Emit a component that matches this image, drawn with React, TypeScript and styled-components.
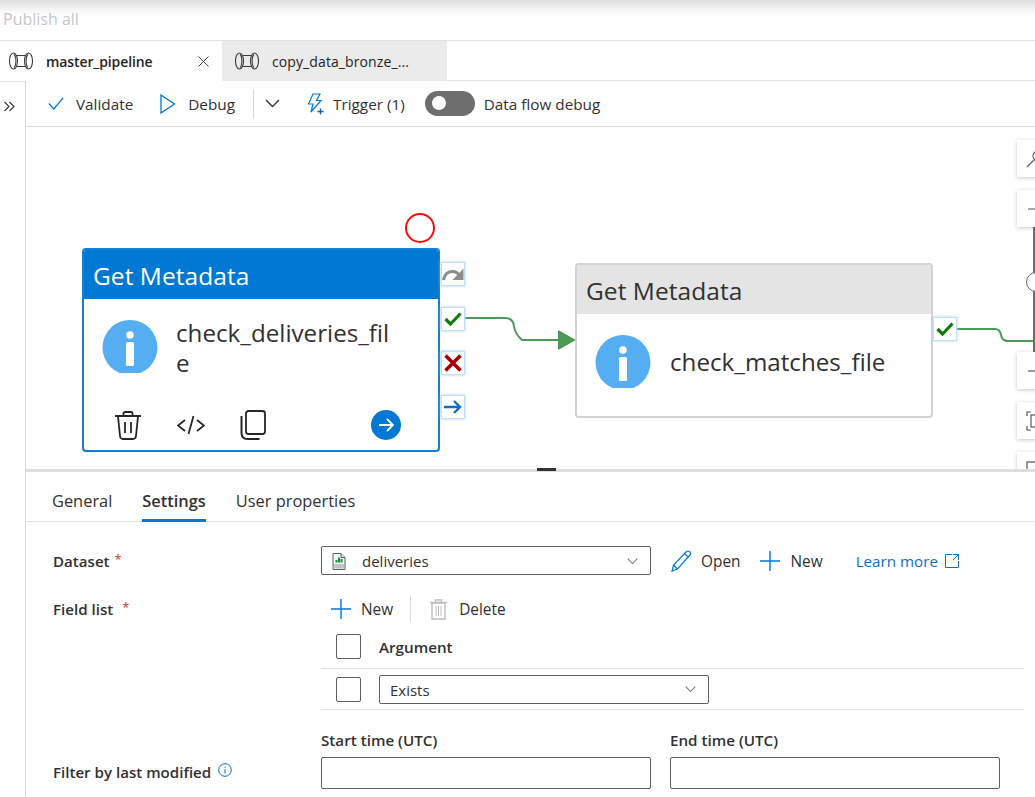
import React from "react";
import styled, { createGlobalStyle } from "styled-components";

const Global = createGlobalStyle`
  html, body { margin: 0; padding: 0; background: #fff; overflow: hidden; }
  * { box-sizing: border-box; }
  body { font-family: "Open Sans", "Noto Sans", "Liberation Sans", sans-serif; color: #323130; }
`;

const Page = styled.div`
  width: 1035px; height: 797px; display: flex; flex-direction: column; overflow: hidden; background: #fff;
`;
const TopBar = styled.div`
  height: 41px; flex: none; padding: 8px 0 0 3px; font-size: 16px; line-height: 22px; color: #c6c6c6;
  background: linear-gradient(#dedede 0, #f4f4f4 9px, #fff 17px); border-bottom: 1px solid #e1e1e1;
`;
const TabStrip = styled.div`
  height: 40px; flex: none; display: flex; box-shadow: inset 0 -1px 0 #e1e1e1;
`;
const Tab = styled.div<{ $active?: boolean }>`
  display: flex; align-items: center; height: 40px;
  width: ${p => (p.$active ? 222 : 225)}px;
  padding-left: ${p => (p.$active ? 9 : 13)}px;
  background: ${p => (p.$active ? "#fff" : "#ebebeb")};
`;
const TabLabel = styled.span<{ $active?: boolean }>`
  margin-left: 13px; font-size: 14px; white-space: nowrap; color: #252423;
  letter-spacing: ${p => (p.$active ? "-0.1px" : "0.1px")};
  font-weight: ${p => (p.$active ? 600 : 400)};
  width: ${p => (p.$active ? "152px" : "auto")};
`;
const Main = styled.div`
  flex: 1; min-height: 0; display: flex;
`;
const LeftRail = styled.div`
  width: 26px; flex: none; border-right: 1px solid #d8d8d8; border-top: 1px solid #e1e1e1; padding: 13px 0 0 3px;
`;
const Workspace = styled.div`
  flex: 1; min-width: 0; display: flex; flex-direction: column;
`;
const Toolbar = styled.div`
  height: 46px; flex: none; display: flex; align-items: center; padding: 0 0 0 22px; border-bottom: 1px solid #dcdcdc;
`;
const ToolButton = styled.div<{ $gap: number; $left?: number }>`
  display: flex; align-items: center; gap: ${p => p.$gap}px; margin-left: ${p => p.$left ?? 0}px;
  font-size: 15.3px; color: #323130; white-space: nowrap;
`;
const ToolDivider = styled.div`
  width: 1px; height: 30px; background: #d4d4d4; margin-left: 18px;
`;
const Toggle = styled.div`
  width: 50px; height: 25px; border-radius: 13px; background: #6e6e6e; margin-left: 20px; padding: 5px 0 0 7px; flex: none;
`;
const Knob = styled.div`
  width: 14px; height: 14px; border-radius: 50%; background: #fff;
`;
const Canvas = styled.div`
  position: relative; height: 342px; flex: none; overflow: hidden; background: #fff;
`;
const Wires = styled.svg`
  position: absolute; left: 0; top: 0;
`;
const Node = styled.div<{ $x: number; $y: number; $w: number; $h: number; $selected?: boolean }>`
  position: absolute; left: ${p => p.$x}px; top: ${p => p.$y}px; width: ${p => p.$w}px; height: ${p => p.$h}px;
  display: flex; flex-direction: column; background: #fff; border-radius: 4px; overflow: hidden;
  border: 2px solid ${p => (p.$selected ? "#0f7fd8" : "#d2d2d2")};
`;
const NodeHeader = styled.div<{ $selected?: boolean }>`
  height: 49px; flex: none; display: flex; align-items: center; padding: 1px 0 0 9px;
  font-size: 24.5px; letter-spacing: 0.05px;
  background: ${p => (p.$selected ? "#0078d4" : "#e4e4e4")};
  color: ${p => (p.$selected ? "#fff" : "#323130")};
`;
const NodeBody = styled.div<{ $center?: boolean }>`
  display: flex; gap: 18px; padding: 21px 0 0 18px; align-items: ${p => (p.$center ? "center" : "flex-start")};
`;
const NodeName = styled.div<{ $single?: boolean }>`
  width: 218px; font-size: 24.2px; line-height: 30px; word-break: break-all; color: #323130;
  margin: ${p => (p.$single ? "1px 0 0 1px" : "-2px 0 0 0")};
`;
const NodeFooter = styled.div`
  margin-top: auto; display: flex; align-items: center; gap: 35px; padding: 0 37px 10px 30px; height: 40px;
`;
const RoundArrow = styled.div`
  width: 30px; height: 30px; margin-left: auto; border-radius: 50%; background: #0078d4; display: flex; align-items: center; justify-content: center;
`;
const PortButton = styled.div<{ $x: number; $y: number }>`
  position: absolute; left: ${p => p.$x}px; top: ${p => p.$y}px; width: 24px; height: 24px;
  display: flex; align-items: center; justify-content: center; background: #fff;
  border: 1px solid #c3ddf5; box-shadow: 0 0 3px #a9cff0;
`;
const Halo = styled.div`
  position: absolute; left: 379px; top: 86px; width: 30px; height: 30px; border-radius: 50%; border: 2px solid #f40f0f;
`;
const ZoomButton = styled.div<{ $y: number; $h?: number }>`
  position: absolute; left: 991px; top: ${p => p.$y}px; width: 40px; height: ${p => p.$h ?? 37}px; background: #fff;
  box-shadow: 0 1px 4px rgba(0,0,0,.22); padding: 9px 0 0 9px; overflow: hidden;
`;
const SliderTrack = styled.div`
  position: absolute; left: 1007px; top: 100px; width: 2px; height: 126px; background: #6b6b6b;
`;
const SliderThumb = styled.div`
  position: absolute; left: 1000px; top: 145px; width: 20px; height: 20px; border-radius: 50%; background: #fff; border: 1.5px solid #666;
`;
const Splitter = styled.div`
  height: 3px; flex: none; background: #dedede; position: relative;
`;
const SplitHandle = styled.div`
  position: absolute; left: 511px; top: -1px; width: 19px; height: 3px; background: #333;
`;
const Tabs = styled.div`
  height: 50px; flex: none; display: flex; gap: 30px; padding-left: 26px; border-bottom: 1px solid #e1e1e1;
`;
const PanelTab = styled.div<{ $active?: boolean }>`
  height: 50px; display: flex; align-items: center; padding-top: 9px; font-size: 16.4px; color: #323130;
  font-weight: ${p => (p.$active ? 600 : 400)};
  border-bottom: 3px solid ${p => (p.$active ? "#0078d4" : "transparent")};
`;
const Form = styled.div`
  display: flex; flex-direction: column; padding: 24px 11px 0 27px;
`;
const FormRow = styled.div<{ $h: number }>`
  display: flex; height: ${p => p.$h}px;
`;
const FieldLabel = styled.div<{ $top: number }>`
  width: 268px; flex: none; padding-top: ${p => p.$top}px; font-size: 15.1px; line-height: 20px; font-weight: 600; color: #323130; white-space: nowrap; display: flex;
`;
const Star = styled.span<{ $gap: number }>`
  color: #d13438; margin-left: ${p => p.$gap}px; font-size: 13px; font-weight: 400; line-height: 16px;
`;
const Select = styled.div<{ $w: number }>`
  width: ${p => p.$w}px; height: 29px; flex: none; display: flex; align-items: center; border: 1px solid #605e5c; border-radius: 2px;
  padding: 1px 12px 0 10px; font-size: 15px; color: #323130;
`;
const SelectText = styled.span<{ $left: number }>`
  margin-left: ${p => p.$left}px; flex: 1;
`;
const Action = styled.div<{ $left: number; $gap: number }>`
  display: flex; align-items: center; margin-left: ${p => p.$left}px; gap: ${p => p.$gap}px; font-size: 15.4px; line-height: 22px; color: #323130; white-space: nowrap;
`;
const ActionText = styled.span`
  padding-top: 2px;
`;
const LearnLink = styled.a`
  display: flex; align-items: center; gap: 7px; margin-left: 33px; font-size: 15.2px; color: #106ebe; white-space: nowrap;
`;
const Content = styled.div`
  flex: 1; display: flex; flex-direction: column;
`;
const DatasetLine = styled.div`
  display: flex; align-items: center; height: 29px;
`;
const FieldTools = styled.div`
  display: flex; align-items: center; height: 26px; margin-top: 1px; padding-left: 10px;
`;
const VBar = styled.div`
  width: 1px; height: 26px; background: #d8d8d8; margin-left: 17px;
`;
const GridRow = styled.div<{ $h: number; $top?: number }>`
  display: flex; align-items: center; height: ${p => p.$h}px; padding-top: ${p => p.$top ?? 0}px; padding-left: 15px; border-bottom: 1px solid #e1e1e1; gap: 18px; flex: none;
`;
const Check = styled.div`
  width: 25px; height: 25px; flex: none; border: 1px solid #605e5c; border-radius: 2px;
`;
const ColHead = styled.div`
  font-size: 15.2px; font-weight: 600;
`;
const TimeRow = styled.div`
  display: flex; gap: 19px; margin-top: 20px;
`;
const TimeField = styled.div`
  width: 330px; display: flex; flex-direction: column;
`;
const TimeLabel = styled.div`
  font-size: 15.2px; line-height: 20px; font-weight: 600; margin-bottom: 7px; white-space: nowrap;
`;
const TimeInput = styled.div`
  height: 32px; border: 1px solid #605e5c; border-radius: 2px;
`;
const InfoWrap = styled.span`
  margin: 1px 0 0 7px; display: flex;
`;

const PipelineIcon = () => (
  <svg width="24" height="18" viewBox="0 0 24 18" fill="none" stroke="#3a3a3a" strokeWidth="1.100">
    <ellipse cx="4.500" cy="9" rx="4" ry="8" />
    <ellipse cx="19.500" cy="9" rx="4" ry="8" />
    <path d="M5 2.500c2.500 2 2.500 11 0 13" />
    <path d="M19 2.500c-2.500 2-2.500 11 0 13" />
    <path d="M7.500 3.500h9M7.500 14.500h9" />
  </svg>
);
const InfoNodeIcon = () => (
  <svg width="56" height="53" viewBox="0 0 56 53" style={{ flex: "none" }}>
    <circle cx="28" cy="27.500" r="27.500" fill="#56aef2" />
    <circle cx="28" cy="15" r="3.800" fill="#fff" />
    <rect x="24" y="22" width="8" height="24" rx="1.500" fill="#fff" />
  </svg>
);
const Trash = () => (
  <svg width="28" height="30" viewBox="0 0 28 30" fill="none" stroke="#262626" strokeWidth="1.800">
    <path d="M1 6h26M9.500 6V3.500q0-1.500 1.500-1.500h6q1.500 0 1.500 1.500V6" />
    <path d="M4 6l2 20q.3 3 3 3h10q2.700 0 3-3l2-20" />
    <path d="M11 12v11M17 12v11" />
  </svg>
);
const CodeIcon = () => (
  <svg width="28" height="24" viewBox="0 0 28 24" fill="none" stroke="#262626" strokeWidth="1.800">
    <path d="M8 7l-7 5.500 7 5.500M20 7l7 5.500-7 5.500M16.500 3l-5 18" />
  </svg>
);
const CopyIcon = () => (
  <svg width="26" height="30" viewBox="0 0 26 30" fill="none" stroke="#262626" strokeWidth="1.800">
    <rect x="6" y="1" width="19" height="23" rx="2.500" />
    <path d="M1.500 6v17q0 6 6 6h12" strokeWidth="2" />
  </svg>
);
const ChevronDown = ({ size = 11, color = "#737373" }: { size?: number; color?: string }) => (
  <svg width={size} height={size * 0.6} viewBox="0 0 15 9" fill="none" stroke={color} strokeWidth="1.400">
    <path d="M1 1l6.500 6.500L14 1" />
  </svg>
);
const PlusIcon = () => (
  <svg width="20" height="20" viewBox="0 0 20 20" stroke="#0078d4" strokeWidth="1.400">
    <path d="M10 0v20M0 10h20" />
  </svg>
);
const CsvIcon = () => (
  <svg width="14" height="17" viewBox="0 0 14 17">
    <path d="M1 .5h8l4 4v12H1z" fill="#f3f3f3" stroke="#566" />
    <path d="M9 .5v4h4" fill="#ddd" stroke="#566" />
    <path d="M3.500 9.500h2V7h-2zM6 9.500h2V4.500H6zM8.500 9.500h2V6h-2z" fill="#1f8a3c" />
    <rect x="2" y="11" width="10" height="4.500" fill="#bfc4c4" />
  </svg>
);
const GreenCheck = () => (
  <svg width="18" height="14" viewBox="0 0 18 14" fill="none" stroke="#107c10" strokeWidth="3.200"><path d="M1.500 7l5 5L16.500 1.500" /></svg>
);

export default function App() {
  return (
    <Page>
      <Global />
      <TopBar>Publish all</TopBar>
      <TabStrip>
        <Tab $active>
          <PipelineIcon />
          <TabLabel $active>master_pipeline</TabLabel>
          <svg width="11" height="11" viewBox="0 0 11 11" stroke="#444" strokeWidth="1"><path d="M.5.5l10 10M10.500.5l-10 10" /></svg>
        </Tab>
        <Tab>
          <PipelineIcon />
          <TabLabel>copy_data_bronze_...</TabLabel>
        </Tab>
      </TabStrip>
      <Main>
        <LeftRail>
          <svg width="13" height="11" viewBox="0 0 13 11" fill="none" stroke="#333" strokeWidth="1.100"><path d="M1.500 1l4.500 4.500L1.500 10M6.500 1l4.500 4.500L6.500 10" /></svg>
        </LeftRail>
        <Workspace>
          <Toolbar>
            <ToolButton $gap={12}>
              <svg width="16" height="13" viewBox="0 0 16 13" fill="none" stroke="#0078d4" strokeWidth="1.300"><path d="M.8 6.500l5 5.500L15.200.8" /></svg>
              Validate
            </ToolButton>
            <ToolButton $gap={12} $left={27}>
              <svg width="16" height="20" viewBox="0 0 16 20" fill="none" stroke="#0078d4" strokeWidth="1.300"><path d="M1 1l13.500 9L1 19z" /></svg>
              Debug
            </ToolButton>
            <ToolDivider />
            <ToolButton $gap={0} $left={11}><ChevronDown size={15} color="#333" /></ToolButton>
            <ToolButton $gap={8} $left={25}>
              <svg width="20" height="22" viewBox="0 0 20 22" fill="none" stroke="#0078d4" strokeWidth="1.200">
                <path d="M8 1h7l-3.500 6.500H16L6 19l2-8H3.500z" />
                <path d="M15.500 15.500v6M12.500 18.500h6" stroke="#1a5fa8" strokeWidth="1.400" />
              </svg>
              Trigger (1)
            </ToolButton>
            <Toggle><Knob /></Toggle>
            <ToolButton $gap={0} $left={9}>Data flow debug</ToolButton>
          </Toolbar>
          <Canvas>
            <Wires width="1009" height="342" viewBox="26 127 1009 342" fill="none">
              <path d="M465 318h40q8 0 9 8t8 14h38" stroke="#4c9a5a" strokeWidth="2" />
              <path d="M558 330l18 10-18 10z" fill="#4b9a58" />
              <path d="M957 329h38q5 0 6 6t7 6h27" stroke="#4c9a5a" strokeWidth="2" />
            </Wires>
            <Halo />
            <Node $x={56} $y={121} $w={358} $h={204} $selected>
              <NodeHeader $selected>Get Metadata</NodeHeader>
              <NodeBody>
                <InfoNodeIcon />
                <NodeName>check_deliveries_file</NodeName>
              </NodeBody>
              <NodeFooter>
                <Trash />
                <CodeIcon />
                <CopyIcon />
                <RoundArrow>
                  <svg width="16" height="14" viewBox="0 0 16 14" fill="none" stroke="#fff" strokeWidth="1.800"><path d="M1 7h14M9 1l6 6-6 6" /></svg>
                </RoundArrow>
              </NodeFooter>
            </Node>
            <PortButton $x={415} $y={135}>
              <svg width="22" height="16" viewBox="0 0 22 16" fill="none"><path d="M1.500 14c1-6 5-8.500 9-8.500 3.500 0 5.500 1.500 6.500 4" stroke="#8c8c8c" strokeWidth="3.200" /><path d="M21.500 2.500v11.500h-11z" fill="#8c8c8c" /></svg>
            </PortButton>
            <PortButton $x={415} $y={180}><GreenCheck /></PortButton>
            <PortButton $x={415} $y={224}>
              <svg width="18" height="18" viewBox="0 0 18 18" stroke="#a80000" strokeWidth="3.600"><path d="M1.500 1.500l15 15M16.500 1.500l-15 15" /></svg>
            </PortButton>
            <PortButton $x={415} $y={268}>
              <svg width="18" height="14" viewBox="0 0 18 14" fill="none" stroke="#106ebe" strokeWidth="2.400"><path d="M0 7h16M10 1l6 6-6 6" /></svg>
            </PortButton>
            <Node $x={549} $y={136} $w={358} $h={155}>
              <NodeHeader>Get Metadata</NodeHeader>
              <NodeBody $center>
                <InfoNodeIcon />
                <NodeName $single>check_matches_file</NodeName>
              </NodeBody>
            </Node>
            <PortButton $x={907} $y={190}><GreenCheck /></PortButton>
            <SliderTrack />
            <SliderThumb />
            <ZoomButton $y={13}>
              <svg width="20" height="20" viewBox="0 0 20 20" fill="none" stroke="#666" strokeWidth="1.200"><circle cx="12" cy="7" r="5" /><path d="M8.500 10.500L1 18" /></svg>
            </ZoomButton>
            <ZoomButton $y={63}>
              <svg width="20" height="20" viewBox="0 0 20 20" stroke="#555" strokeWidth="1.200"><path d="M2 10h16M10 2v16" /></svg>
            </ZoomButton>
            <ZoomButton $y={225}>
              <svg width="20" height="20" viewBox="0 0 20 20" stroke="#555" strokeWidth="1.200"><path d="M2 10h16" /></svg>
            </ZoomButton>
            <ZoomButton $y={275}>
              <svg width="20" height="20" viewBox="0 0 20 20" fill="none" stroke="#555" strokeWidth="1.200"><path d="M1 5V1h4M1 15v4h4M15 1h4v4" /><rect x="5" y="4" width="12" height="12" /></svg>
            </ZoomButton>
            <ZoomButton $y={325} $h={40}>
              <svg width="20" height="20" viewBox="0 0 20 20" fill="none" stroke="#555" strokeWidth="1.200"><rect x="1" y="1" width="12" height="12" /></svg>
            </ZoomButton>
          </Canvas>
          <Splitter><SplitHandle /></Splitter>
          <Tabs>
            <PanelTab>General</PanelTab>
            <PanelTab $active>Settings</PanelTab>
            <PanelTab>User properties</PanelTab>
          </Tabs>
          <Form>
            <FormRow $h={49}>
              <FieldLabel $top={5}>Dataset<Star $gap={5}>*</Star></FieldLabel>
              <Content>
                <DatasetLine>
                  <Select $w={330}>
                    <CsvIcon />
                    <SelectText $left={16}>deliveries</SelectText>
                    <ChevronDown />
                  </Select>
                  <Action $left={20} $gap={9}>
                    <svg width="21" height="22" viewBox="0 0 21 22" fill="none" stroke="#0078d4" strokeWidth="1.200"><path d="M1 21l1.500-6L15.500 1.500q1.500-1 3 0t1 3L6.500 19z" /><path d="M2.500 15l4 4M13.500 3.500l4 4" /></svg>
                    <ActionText>Open</ActionText>
                  </Action>
                  <Action $left={20} $gap={10}><PlusIcon /><ActionText>New</ActionText></Action>
                  <LearnLink>
                    Learn more
                    <svg width="14" height="14" viewBox="0 0 14 14" fill="none" stroke="#106ebe" strokeWidth="1"><path d="M7 .5H.5v13h13V7M8 .5h5.500V6M13.500.5L8 6" /></svg>
                  </LearnLink>
                </DatasetLine>
              </Content>
            </FormRow>
            <FormRow $h={115}>
              <FieldLabel $top={4}>Field list<Star $gap={9}>*</Star></FieldLabel>
              <Content>
                <FieldTools>
                  <Action $left={0} $gap={10}><PlusIcon /><ActionText>New</ActionText></Action>
                  <VBar />
                  <Action $left={19} $gap={12}>
                    <svg width="17" height="21" viewBox="0 0 17 21" fill="none" stroke="#bdbdbd" strokeWidth="1.400"><path d="M0 3.500h17M5.500 3V1h6v2" /><path d="M2 4h13v16H2z" /><path d="M6 7v10M8.500 7v10M11 7v10" strokeWidth="1" /></svg>
                    <ActionText>Delete</ActionText>
                  </Action>
                </FieldTools>
                <GridRow $h={47} $top={3}>
                  <Check />
                  <ColHead>Argument</ColHead>
                </GridRow>
                <GridRow $h={41}>
                  <Check />
                  <Select $w={330}>
                    <SelectText $left={0}>Exists</SelectText>
                    <ChevronDown />
                  </Select>
                </GridRow>
              </Content>
            </FormRow>
            <FormRow $h={87}>
              <FieldLabel $top={52}>
                Filter by last modified
                <InfoWrap>
                  <svg width="14" height="14" viewBox="0 0 14 14" fill="none" stroke="#0b6cb5" strokeWidth="1"><circle cx="7" cy="7" r="6.300" /><path d="M7 6v4.500M7 3.500v1.200" /></svg>
                </InfoWrap>
              </FieldLabel>
              <Content>
                <TimeRow>
                  <TimeField>
                    <TimeLabel>Start time (UTC)</TimeLabel>
                    <TimeInput />
                  </TimeField>
                  <TimeField>
                    <TimeLabel>End time (UTC)</TimeLabel>
                    <TimeInput />
                  </TimeField>
                </TimeRow>
              </Content>
            </FormRow>
          </Form>
        </Workspace>
      </Main>
    </Page>
  );
}
